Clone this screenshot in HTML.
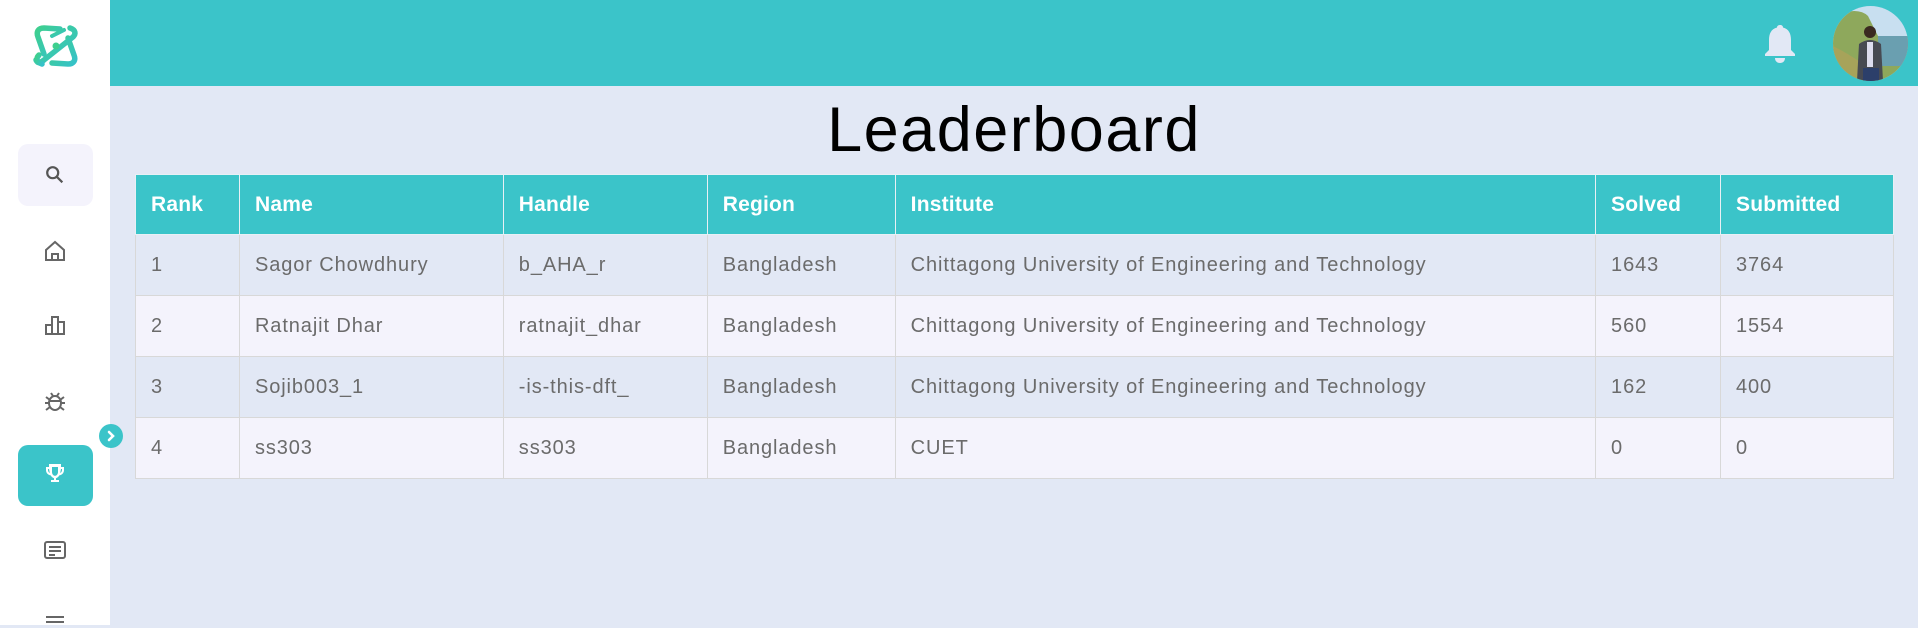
<!DOCTYPE html>
<html><head><meta charset="utf-8"><style>
*{margin:0;padding:0;box-sizing:border-box}
body{width:1918px;height:625px;overflow:hidden;background:#e2e8f5;font-family:"Liberation Sans",sans-serif;position:relative}
.side{position:absolute;left:0;top:0;width:110px;height:625px;background:#fff}
.top{position:absolute;left:110px;top:0;right:0;height:86px;background:#3bc4c9}
.btn{position:absolute;left:18px;width:75px;border-radius:10px}
.ic{position:absolute;left:43px}
h1{position:absolute;left:110px;right:0;top:94px;text-align:center;font-weight:normal;font-size:63px;color:#000;letter-spacing:1.5px}
table{position:absolute;left:135px;top:174px;width:1759px;border-collapse:collapse}
td,th{border:1px solid #d8d8d8;text-align:left;padding-left:15px;height:61px;font-size:20px;letter-spacing:.9px}
th{background:#3bc4c9;color:#fff;font-weight:bold;border-color:#e8f0f5;letter-spacing:.2px;height:60px;font-size:21px}
td{color:#6b6b6b}
tr.o td{background:#e2e8f5}tr.e td{background:#f4f3fc}
</style></head><body>
<div class="side">
<svg style="position:absolute;left:30px;top:20px" width="52" height="52" viewBox="0 0 52 52" fill="none" stroke-width="5.5" stroke-linecap="round">
<defs><linearGradient id="g" x1="0" y1="0" x2="1" y2="1"><stop offset="0" stop-color="#3ecf8e"/><stop offset="1" stop-color="#36c2c9"/></linearGradient></defs>
<path d="M30 9 L14 8 C8 8 6 12 8 17 L14 34" stroke="url(#g)"/>
<path d="M22 43 L38 44 C44 44 46 40 44 35 L38 18" stroke="url(#g)"/>
<path d="M40 8 C46 10 46 14 43 17 L14 40 C10 43 8 44 6 40" stroke="url(#g)"/>
<path d="M12 44 C6 42 6 38 9 35" stroke="url(#g)"/>
<path d="M22 16 L34 10" stroke="url(#g)" stroke-width="4"/>
<circle cx="26" cy="26" r="3.5" fill="#3ecf8e" stroke="none"/></svg>
<div class="btn" style="top:144px;height:62px;background:#f4f3fc"></div>
<svg class="ic" style="top:164px;left:44px" width="22" height="22" viewBox="0 0 24 24" fill="none" stroke="#555" stroke-width="2.4"><circle cx="9.5" cy="9.5" r="6"/><path d="M14 14l6 6"/></svg>
<svg class="ic" style="top:239px" width="24" height="24" viewBox="0 0 24 24" fill="none" stroke="#666" stroke-width="2"><path d="M3 11l9-8 9 8v10H3z"/><path d="M9 21v-6h6v6"/></svg>
<svg class="ic" style="top:313px" width="24" height="24" viewBox="0 0 24 24" fill="none" stroke="#666" stroke-width="2"><path d="M2 21h20M3 21v-9h6v9M9 21V4h6v17M15 21v-12h6v12"/></svg>
<svg class="ic" style="top:389px" width="24" height="24" viewBox="0 0 24 24" fill="none" stroke="#666" stroke-width="2"><ellipse cx="12" cy="14" rx="6" ry="7"/><path d="M6 12h12M2 14h4M18 14h4M3 8l4 3M21 8l-4 3M3 21l4-3M21 21l-4-3M8 4l2 3M16 4l-2 3"/></svg>
<div class="btn" style="top:445px;height:61px;background:#3bc4c9"></div>
<svg class="ic" style="top:461px" width="24" height="24" viewBox="0 0 24 24" fill="#fff"><path d="M6 3h12v3h3v3c0 3-2 5-4.5 5.3C15.5 16 14 17 13 17.3V19h3v2H8v-2h3v-1.7C10 17 8.5 16 7.5 14.3 5 14 3 12 3 9V6h3z M5 8v1c0 1.5 1 2.7 1.8 3L6 8z M19 8h-1l-.8 4c.8-.3 1.8-1.5 1.8-3z M9 6v5c0 2 1.3 3.8 3 3.8s3-1.8 3-3.8V6z"/></svg>
<svg class="ic" style="top:538px" width="24" height="24" viewBox="0 0 24 24" fill="none" stroke="#666" stroke-width="2"><rect x="2" y="4" width="20" height="16" rx="2"/><path d="M6 9h12M6 13h12M6 17h6"/></svg>
<svg class="ic" style="top:616px;left:46px" width="18" height="12" viewBox="0 0 18 12" stroke="#666" stroke-width="2"><path d="M0 1h18M0 6h18"/></svg>
</div>
<div class="top"></div>
<div style="position:absolute;left:99px;top:424px;width:24px;height:24px;border-radius:50%;background:#3bc4c9"></div>
<svg style="position:absolute;left:104px;top:429px" width="14" height="14" viewBox="0 0 14 14" fill="none" stroke="#fff" stroke-width="2.6" stroke-linecap="round"><path d="M5 3l4 4-4 4"/></svg>
<svg style="position:absolute;left:1762px;top:24px" width="36" height="40" viewBox="0 0 36 40" fill="#e2e8f5"><path d="M18 1c-2 0-3 1-3 2.5C9 5 7 10 7 16v10l-4 4v2h30v-2l-4-4V16c0-6-2-11-8-12.5C21 2 20 1 18 1z"/><path d="M13 34h10c0 3-2 5-5 5s-5-2-5-5z"/></svg>
<svg style="position:absolute;left:1833px;top:6px" width="75" height="75" viewBox="0 0 75 75"><defs><clipPath id="c"><circle cx="37.5" cy="37.5" r="37.5"/></clipPath></defs><g clip-path="url(#c)"><rect width="75" height="75" fill="#c8dff0"/><path d="M0 10 Q25 0 35 10 L45 30 L75 30 V75 H0z" fill="#8ea85c"/><rect x="45" y="30" width="30" height="30" fill="#6a9fb0"/><path d="M0 40 Q30 55 50 75 H0z" fill="#a7a35a"/><circle cx="37" cy="26" r="6" fill="#3a2a20"/><path d="M26 38 Q37 30 48 38 L50 75 H24z" fill="#474a52"/><rect x="34" y="36" width="6" height="25" fill="#dde"/><rect x="30" y="62" width="16" height="13" fill="#2c3f6a"/></g></svg>
<h1>Leaderboard</h1>
<table>
<colgroup><col style="width:104px"><col style="width:264px"><col style="width:204px"><col style="width:188px"><col style="width:701px"><col style="width:125px"><col style="width:173px"></colgroup>
<tr><th>Rank</th><th>Name</th><th>Handle</th><th>Region</th><th>Institute</th><th>Solved</th><th>Submitted</th></tr>
<tr class="o"><td>1</td><td>Sagor Chowdhury</td><td>b_AHA_r</td><td>Bangladesh</td><td>Chittagong University of Engineering and Technology</td><td>1643</td><td>3764</td></tr>
<tr class="e"><td>2</td><td>Ratnajit Dhar</td><td>ratnajit_dhar</td><td>Bangladesh</td><td>Chittagong University of Engineering and Technology</td><td>560</td><td>1554</td></tr>
<tr class="o"><td>3</td><td>Sojib003_1</td><td>-is-this-dft_</td><td>Bangladesh</td><td>Chittagong University of Engineering and Technology</td><td>162</td><td>400</td></tr>
<tr class="e"><td>4</td><td>ss303</td><td>ss303</td><td>Bangladesh</td><td>CUET</td><td>0</td><td>0</td></tr>
</table>
</body></html>
